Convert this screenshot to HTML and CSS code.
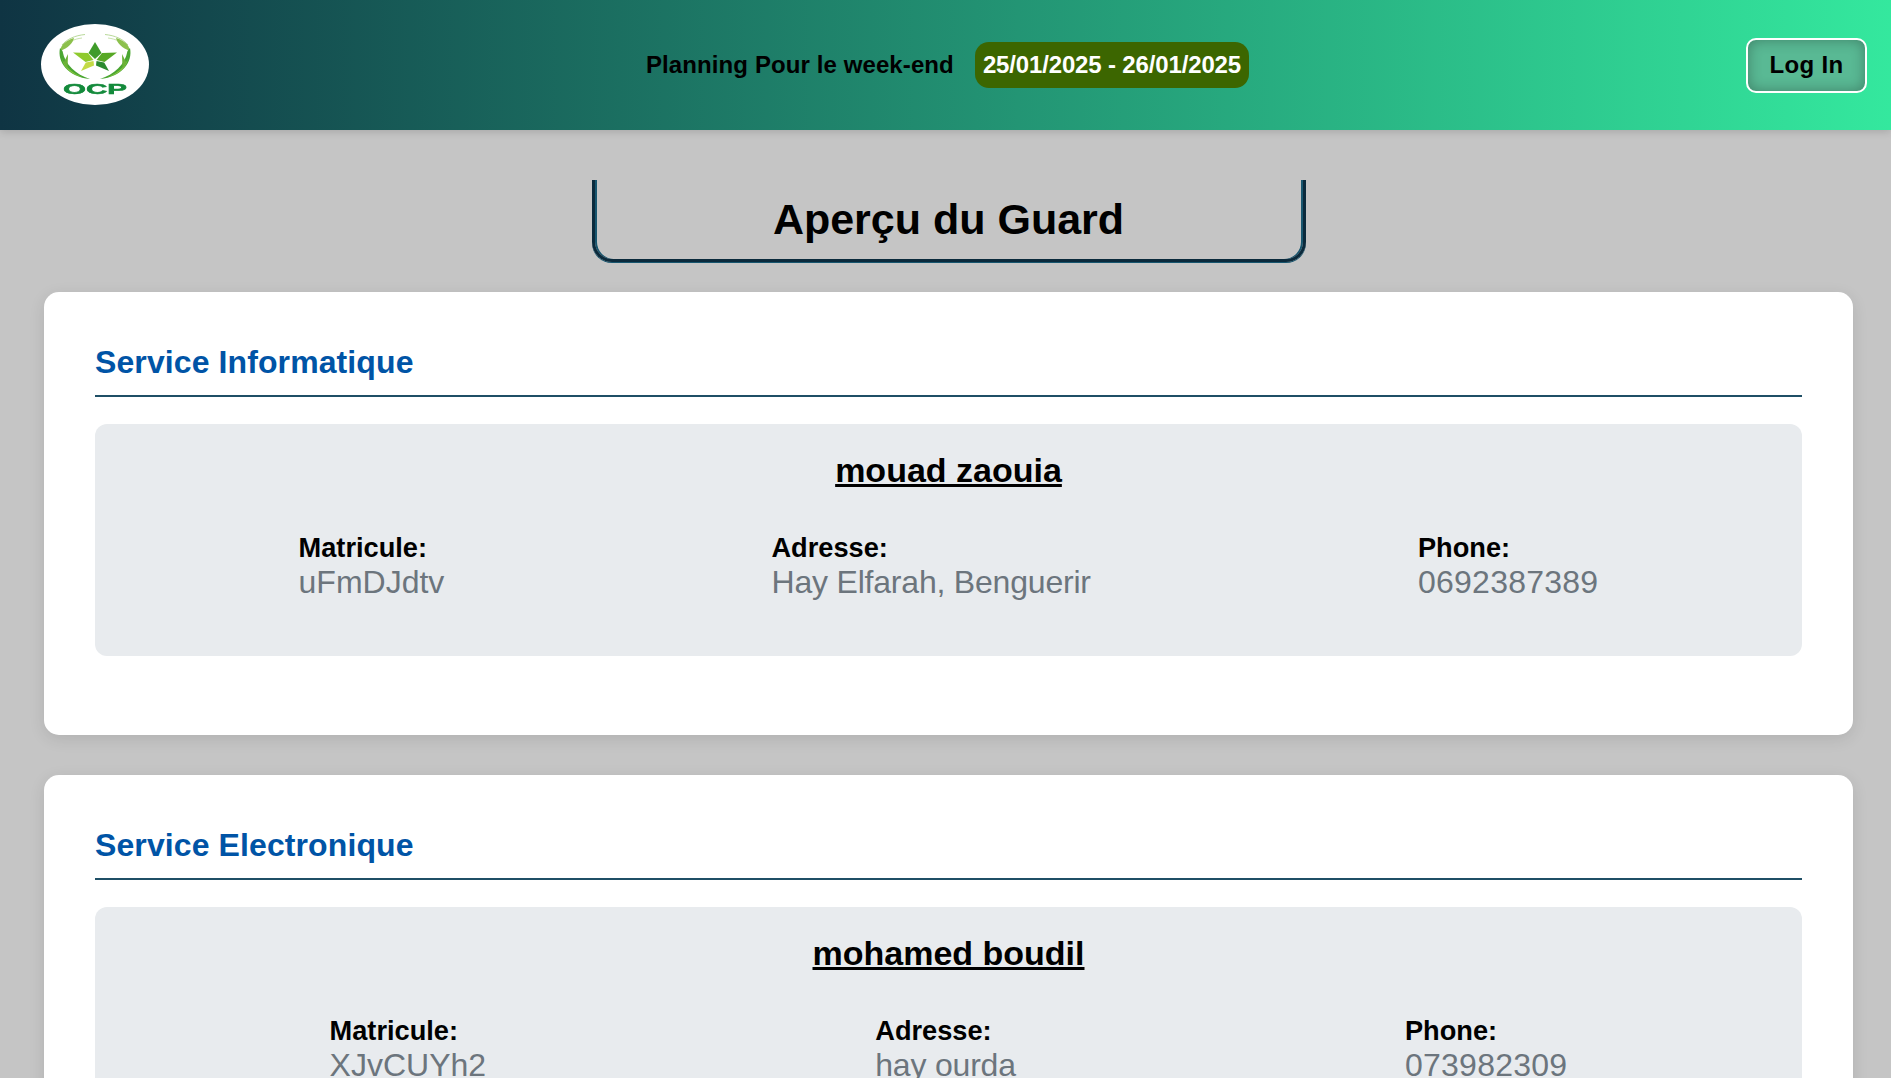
FILE: index.html
```html
<!DOCTYPE html>
<html lang="fr">
<head>
<meta charset="utf-8">
<title>Aperçu du Guard</title>
<link rel="stylesheet" href="styles.css">
</head>
<body>
<header class="topbar">
  <div class="logo">
    <svg class="logo-svg" viewBox="0 0 108 81" width="108" height="81" aria-label="OCP">
      <ellipse cx="54" cy="40.500" rx="54" ry="40.500" fill="#fff"/>
      <g class="wreath">
        <path d="M44 10.500C34 11.500 26 15 21 21" fill="none" stroke="#b9d99a" stroke-width="1"/>
        <path d="M41 14C33 15 27 18 23 23" fill="none" stroke="#c9e2ae" stroke-width="1"/>
        <path d="M19 27C20 20 26 16 33 14C32 19 27 24 19 27z" fill="#8cc04c"/>
        <path d="M19 24C16 38 27 53 49 55C35 50.500 24 41 21.500 27z" fill="#4aa632"/>
        <path d="M21 34C23 42 31 49 41 53C32 51 22 44 21 34z" fill="#8cc63f"/>
        <path d="M27 30L22.500 39L26.500 45z" fill="#6bb237"/>
      </g>
      <g class="wreath wreath-right">
        <path d="M44 10.500C34 11.500 26 15 21 21" fill="none" stroke="#b9d99a" stroke-width="1"/>
        <path d="M41 14C33 15 27 18 23 23" fill="none" stroke="#c9e2ae" stroke-width="1"/>
        <path d="M19 27C20 20 26 16 33 14C32 19 27 24 19 27z" fill="#8cc04c"/>
        <path d="M19 24C16 38 27 53 49 55C35 50.500 24 41 21.500 27z" fill="#4aa632"/>
        <path d="M21 34C23 42 31 49 41 53C32 51 22 44 21 34z" fill="#8cc63f"/>
        <path d="M27 30L22.500 39L26.500 45z" fill="#6bb237"/>
      </g>
      <path d="M54 18L60.500 29L54 35L47.500 29z" fill="#3f9b2a"/>
      <path d="M32 28.500L47 29L52.500 36L44.500 38z" fill="#8fca2e"/>
      <path d="M76 28.500L61 29L55.500 36L63.500 38z" fill="#57a825"/>
      <path d="M40 47L44.800 38.500L52.500 37L53 41.500z" fill="#c3da45"/>
      <path d="M68 47L63.200 38.500L55.500 37L55 41.500z" fill="#2b8a2f"/>
      <text class="logo-text" x="54" y="70.300" text-anchor="middle" textLength="64" lengthAdjust="spacingAndGlyphs">OCP</text>
    </svg>
  </div>
  <div class="planning">
    <span class="planning-label">Planning Pour le week-end</span>
    <span class="planning-dates">25/01/2025 - 26/01/2025</span>
  </div>
  <button class="login" type="button">Log In</button>
</header>
<main class="page">
  <h1 class="title">Aperçu du Guard</h1>
  <section class="card">
    <h2 class="service">Service Informatique</h2>
    <article class="person">
      <h3 class="name">mouad zaouia</h3>
      <div class="details">
        <div class="field"><strong>Matricule:</strong><span>uFmDJdtv</span></div>
        <div class="field"><strong>Adresse:</strong><span class="address">Hay Elfarah, Benguerir</span></div>
        <div class="field"><strong>Phone:</strong><span class="phone">0692387389</span></div>
      </div>
    </article>
  </section>
  <section class="card">
    <h2 class="service">Service Electronique</h2>
    <article class="person">
      <h3 class="name">mohamed boudil</h3>
      <div class="details">
        <div class="field"><strong>Matricule:</strong><span>XJvCUYh2</span></div>
        <div class="field"><strong>Adresse:</strong><span class="address">hay ourda</span></div>
        <div class="field"><strong>Phone:</strong><span class="phone">073982309</span></div>
      </div>
    </article>
  </section>
</main>
</body>
</html>
```
FILE: styles.css
```css
* { box-sizing: border-box; }
html, body { height: 100%; overflow: hidden; }
body {
  margin: 0;
  background: #c5c5c5;
  color: #000;
  font-family: "Liberation Sans", Arial, sans-serif;
}
.topbar {
  height: 130px;
  display: grid;
  grid-template-columns: 1fr auto 1fr;
  align-items: center;
  padding: 0 24px 0 41px;
  background: linear-gradient(to right, #0f3443, #34e89e);
  box-shadow: 0 2px 8px rgba(0, 0, 0, 0.15);
}
.logo { display: flex; margin-top: -2px; }
.logo-svg { display: block; filter: blur(0.35px); }
.wreath-right { transform: translateX(108px) scaleX(-1); }
.logo-text {
  font: 900 14px "Liberation Sans", Arial, sans-serif;
  fill: #138a3b;
  stroke: #138a3b;
  stroke-width: 0.5px;
}
.planning { display: flex; align-items: center; gap: 21px; margin-right: 13px; }
.planning-label { font-size: 24px; font-weight: 700; letter-spacing: 0.1px; }
.planning-dates {
  padding: 9px 8px;
  background: #3c6600;
  border-radius: 14px;
  color: #fff;
  font-size: 24px;
  font-weight: 700;
  letter-spacing: -0.15px;
}
.login {
  justify-self: end;
  width: 121px;
  height: 55px;
  border: 2px solid #fff;
  border-radius: 10px;
  background: #59b994;
  box-shadow: inset 0 0 14px rgba(0, 0, 0, 0.3);
  color: #000;
  font: 700 24px "Liberation Sans", Arial, sans-serif;
  letter-spacing: 0.3px;
}
.page { padding: 50px 38px 0 44px; }
.title {
  width: 714px;
  height: 82px;
  margin: 0 auto 30px;
  border: solid #0b2a3c;
  border-width: 0 3px 3px;
  border-radius: 0 0 20px 20px;
  box-shadow: inset 2px 0 0 #17566f, inset -2px 0 0 #17566f, 0 1px 0 #17566f;
  font-size: 43px;
  line-height: 78px;
  text-align: center;
}
.card {
  margin-bottom: 40px;
  padding: 50px 51px 79px;
  background: #fff;
  border-radius: 15px;
  box-shadow: 0 4px 16px rgba(0, 0, 0, 0.1);
}
.service {
  margin: 0 0 27px;
  padding-bottom: 12px;
  border-bottom: 2px solid #1f4f66;
  color: #0054a6;
  font-size: 32px;
  line-height: 41px;
  font-weight: 700;
  letter-spacing: 0.1px;
}
.person {
  height: 232px;
  padding: 23px 40px;
  background: #e8ebee;
  border-radius: 12px;
}
.name {
  margin: 0 0 37px;
  font-size: 34px;
  line-height: 46px;
  font-weight: 700;
  text-align: center;
  text-decoration: underline;
}
.details { display: flex; justify-content: space-around; }
.field { display: flex; flex-direction: column; font-size: 27.2px; line-height: 36px; }
.field strong { font-weight: 700; }
.field span { color: #6c757d; font-size: 32px; line-height: 33px; }
.field .address { letter-spacing: -0.2px; }
.field .phone { letter-spacing: 0.25px; }
```
